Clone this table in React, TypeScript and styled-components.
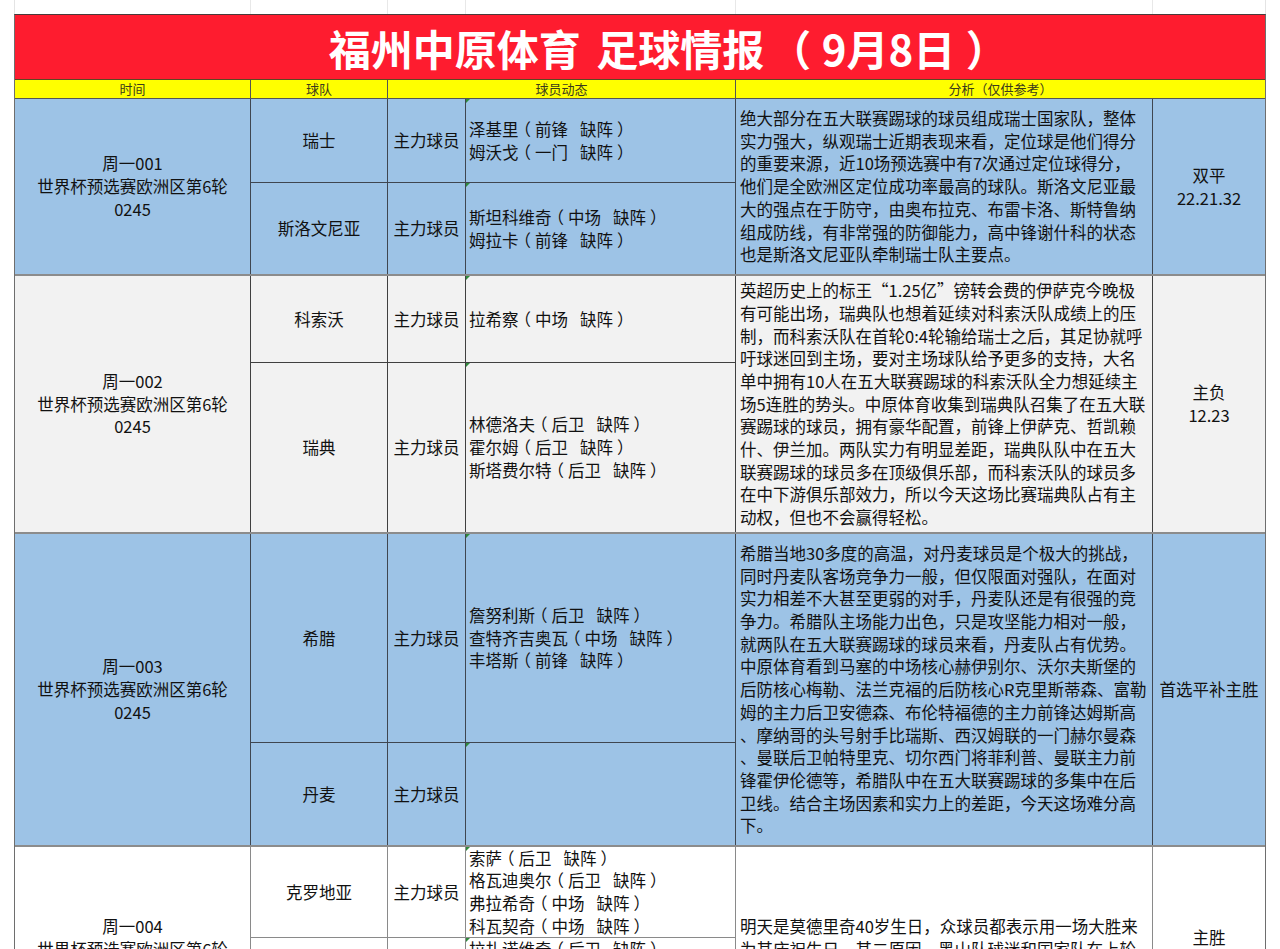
import React from "react";
import styled, { createGlobalStyle } from "styled-components";

// column widths taken from the sheet (first col / last col lose 1px to the outer border)
const COLS = "236px 137px 78px 270px 417px 112px";
const LINE = "22.7px";

const GlobalStyle = createGlobalStyle`
  html, body {
    margin: 0;
    padding: 0;
    background: #ffffff;
    overflow: hidden;
  }
  body {
    font-family: "Noto Sans CJK SC", "Microsoft YaHei", "Noto Sans", sans-serif;
    color: #111111;
  }
`;

const Page = styled.div`
  width: 1280px;
  padding-left: 14px;
  box-sizing: border-box;
`;

// faint spreadsheet grid above the printed area
const TopStrip = styled.div`
  display: grid;
  grid-template-columns: ${COLS};
  height: 14px;
  border-left: 1px solid #e4e4e4;
  border-right: 1px solid #e4e4e4;
  width: 1252px;
  box-sizing: border-box;
`;

const StripCell = styled.div`
  border-right: 1px solid #e8e8e8;
  &:last-child {
    border-right: none;
  }
`;

const Sheet = styled.div`
  width: 1252px;
  box-sizing: border-box;
  border-top: 1px solid #4a3a3a;
  border-left: 1px solid #6e6e6e;
  border-right: 1px solid #6e6e6e;
`;

const Banner = styled.div`
  height: 65px;
  box-sizing: border-box;
  padding-left: 46px;
  background: #fe1c2f;
  display: flex;
  align-items: center;
  justify-content: center;
  color: #ffffff;
  font-size: 42px;
  font-weight: 700;
  word-spacing: 6px;
  white-space: pre;
  border-bottom: 1px solid #5a4a20;
`;

// the sheet's font centres full-width brackets in their box; with "halt" Noto drops
// the blank half, and the padding puts it back on both sides
const Bracket = styled.span`
  font-feature-settings: "halt";
  padding: 0 0.25em;
`;

const HeaderRow = styled.div`
  display: grid;
  grid-template-columns: ${COLS};
  height: 19px;
  box-sizing: border-box;
  background: #ffff00;
  border-bottom: 1px solid #555555;
`;

const HeadCell = styled.div<{ $span?: number; $last?: boolean }>`
  grid-column: span ${(p) => p.$span ?? 1};
  font-size: 13px;
  line-height: 18px;
  text-align: center;
  color: #3b3a1c;
  border-right: ${(p) => (p.$last ? "none" : "1px solid #555555")};
`;

const Group = styled.div<{ $bg: string; $rows: string; $line: string }>`
  display: grid;
  grid-template-columns: ${COLS};
  grid-template-rows: ${(p) => p.$rows};
  background: ${(p) => p.$bg};
  border-bottom: 2px solid #8c8c8c;
  font-size: 16.5px;
  line-height: ${LINE};
  --cell-line: ${(p) => p.$line};
`;

const MatchCell = styled.div`
  grid-column: 1;
  grid-row: 1 / -1;
  display: flex;
  flex-direction: column;
  align-items: center;
  justify-content: center;
  text-align: center;
  border-right: 1px solid var(--cell-line);
`;

const SubCell = styled.div<{ $col: number; $row: number; $divider: boolean }>`
  grid-column: ${(p) => p.$col};
  grid-row: ${(p) => p.$row};
  display: flex;
  align-items: center;
  justify-content: center;
  white-space: nowrap;
  border-right: 1px solid var(--cell-line);
  border-bottom: ${(p) => (p.$divider ? "1px solid var(--cell-line)" : "none")};
  box-sizing: border-box;
`;

const PlayersCell = styled(SubCell)`
  position: relative;
  flex-direction: column;
  align-items: flex-start;
  padding-left: 3px;

  &::before {
    content: "";
    position: absolute;
    top: 0;
    left: 0;
    border-top: 4px solid #2f8a3c;
    border-right: 4px solid transparent;
  }
`;

const AnalysisCell = styled.div`
  grid-column: 5;
  grid-row: 1 / -1;
  display: flex;
  flex-direction: column;
  justify-content: center;
  padding: 0 4px;
  overflow: hidden;
  white-space: nowrap;
  border-right: 1px solid var(--cell-line);
`;

const OddsCell = styled.div`
  grid-column: 6;
  grid-row: 1 / -1;
  display: flex;
  flex-direction: column;
  align-items: center;
  justify-content: center;
  white-space: nowrap;
`;

const Line = styled.span`
  display: block;
`;

type Player = { name: string; pos: string };
type Side = { team: string; players: Player[] };
type Match = {
  code: string;
  bg: string;
  line: string;
  rows: string;
  sides: Side[];
  analysis: string[];
  tip: string[];
};

const out = (name: string, pos: string): Player => ({ name, pos });

const matches: Match[] = [
  {
    code: "周一001",
    bg: "#9dc3e6",
    line: "#3f4650",
    rows: "84px 91px",
    sides: [
      { team: "瑞士", players: [out("泽基里", "前锋"), out("姆沃戈", "一门")] },
      { team: "斯洛文尼亚", players: [out("斯坦科维奇", "中场"), out("姆拉卡", "前锋")] },
    ],
    analysis: [
      "绝大部分在五大联赛踢球的球员组成瑞士国家队，整体",
      "实力强大，纵观瑞士近期表现来看，定位球是他们得分",
      "的重要来源，近10场预选赛中有7次通过定位球得分，",
      "他们是全欧洲区定位成功率最高的球队。斯洛文尼亚最",
      "大的强点在于防守，由奥布拉克、布雷卡洛、斯特鲁纳",
      "组成防线，有非常强的防御能力，高中锋谢什科的状态",
      "也是斯洛文尼亚队牵制瑞士队主要点。",
    ],
    tip: ["双平", "22.21.32"],
  },
  {
    code: "周一002",
    bg: "#f2f2f2",
    line: "#404040",
    rows: "87px 169px",
    sides: [
      { team: "科索沃", players: [out("拉希察", "中场")] },
      {
        team: "瑞典",
        players: [out("林德洛夫", "后卫"), out("霍尔姆", "后卫"), out("斯塔费尔特", "后卫")],
      },
    ],
    analysis: [
      "英超历史上的标王“1.25亿”镑转会费的伊萨克今晚极",
      "有可能出场，瑞典队也想着延续对科索沃队成绩上的压",
      "制，而科索沃队在首轮0:4轮输给瑞士之后，其足协就呼",
      "吁球迷回到主场，要对主场球队给予更多的支持，大名",
      "单中拥有10人在五大联赛踢球的科索沃队全力想延续主",
      "场5连胜的势头。中原体育收集到瑞典队召集了在五大联",
      "赛踢球的球员，拥有豪华配置，前锋上伊萨克、哲凯赖",
      "什、伊兰加。两队实力有明显差距，瑞典队队中在五大",
      "联赛踢球的球员多在顶级俱乐部，而科索沃队的球员多",
      "在中下游俱乐部效力，所以今天这场比赛瑞典队占有主",
      "动权，但也不会赢得轻松。",
    ],
    tip: ["主负", "12.23"],
  },
  {
    code: "周一003",
    bg: "#9dc3e6",
    line: "#3f4650",
    rows: "209px 102px",
    sides: [
      {
        team: "希腊",
        players: [out("詹努利斯", "后卫"), out("查特齐吉奥瓦", "中场"), out("丰塔斯", "前锋")],
      },
      { team: "丹麦", players: [] },
    ],
    analysis: [
      "希腊当地30多度的高温，对丹麦球员是个极大的挑战，",
      "同时丹麦队客场竞争力一般，但仅限面对强队，在面对",
      "实力相差不大甚至更弱的对手，丹麦队还是有很强的竞",
      "争力。希腊队主场能力出色，只是攻坚能力相对一般，",
      "就两队在五大联赛踢球的球员来看，丹麦队占有优势。",
      "中原体育看到马塞的中场核心赫伊别尔、沃尔夫斯堡的",
      "后防核心梅勒、法兰克福的后防核心R克里斯蒂森、富勒",
      "姆的主力后卫安德森、布伦特福德的主力前锋达姆斯高",
      "、摩纳哥的头号射手比瑞斯、西汉姆联的一门赫尔曼森",
      "、曼联后卫帕特里克、切尔西门将菲利普、曼联主力前",
      "锋霍伊伦德等，希腊队中在五大联赛踢球的多集中在后",
      "卫线。结合主场因素和实力上的差距，今天这场难分高",
      "下。",
    ],
    tip: ["首选平补主胜"],
  },
  {
    code: "周一004",
    bg: "#ffffff",
    line: "#8a8a8a",
    rows: "91px 113px",
    sides: [
      {
        team: "克罗地亚",
        players: [out("索萨", "后卫"), out("格瓦迪奥尔", "后卫"), out("弗拉希奇", "中场"), out("科瓦契奇", "中场")],
      },
      {
        team: "黑山",
        players: [out("拉扎诺维奇", "后卫"), out("萨沃维奇", "后卫"), out("扬科维奇", "中场"), out("武科维奇", "前锋"), out("马拉什", "中场")],
      },
    ],
    analysis: [
      "明天是莫德里奇40岁生日，众球员都表示用一场大胜来",
      "为其庆祝生日，其二原因，黑山队球迷和国家队在上轮",
      "比赛后闹出矛盾，球队军心不稳。",
    ],
    tip: ["主胜", "1.36"],
  },
];

function PlayerLine({ p }: { p: Player }) {
  return (
    <Line>
      {p.name}
      <Bracket>（</Bracket>
      {p.pos}
      {"\u2002 缺阵"}
      <Bracket>）</Bracket>
    </Line>
  );
}

function MatchGroup({ m }: { m: Match }) {
  return (
    <Group $bg={m.bg} $rows={m.rows} $line={m.line}>
      <MatchCell>
        <Line>{m.code}</Line>
        <Line>世界杯预选赛欧洲区第6轮</Line>
        <Line>0245</Line>
      </MatchCell>
      {m.sides.map((s, i) => {
        const divider = i < m.sides.length - 1;
        return (
          <React.Fragment key={s.team}>
            <SubCell $col={2} $row={i + 1} $divider={divider}>
              {s.team}
            </SubCell>
            <SubCell $col={3} $row={i + 1} $divider={divider}>
              主力球员
            </SubCell>
            <PlayersCell $col={4} $row={i + 1} $divider={divider}>
              {s.players.map((p) => (
                <PlayerLine key={p.name} p={p} />
              ))}
            </PlayersCell>
          </React.Fragment>
        );
      })}
      <AnalysisCell>
        {m.analysis.map((l, i) => (
          <Line key={i}>{l}</Line>
        ))}
      </AnalysisCell>
      <OddsCell>
        {m.tip.map((t) => (
          <Line key={t}>{t}</Line>
        ))}
      </OddsCell>
    </Group>
  );
}

export default function App() {
  return (
    <Page>
      <GlobalStyle />
      <TopStrip>
        {Array.from({ length: 6 }).map((_, i) => (
          <StripCell key={i} />
        ))}
      </TopStrip>
      <Sheet>
        <Banner>
          福州中原体育 足球情报 <Bracket>（</Bracket>9月8日<Bracket>）</Bracket>
        </Banner>
        <HeaderRow>
          <HeadCell>时间</HeadCell>
          <HeadCell>球队</HeadCell>
          <HeadCell $span={2}>球员动态</HeadCell>
          <HeadCell $span={2} $last>
            分析（仅供参考）
          </HeadCell>
        </HeaderRow>
        {matches.map((m) => (
          <MatchGroup key={m.code} m={m} />
        ))}
      </Sheet>
    </Page>
  );
}
